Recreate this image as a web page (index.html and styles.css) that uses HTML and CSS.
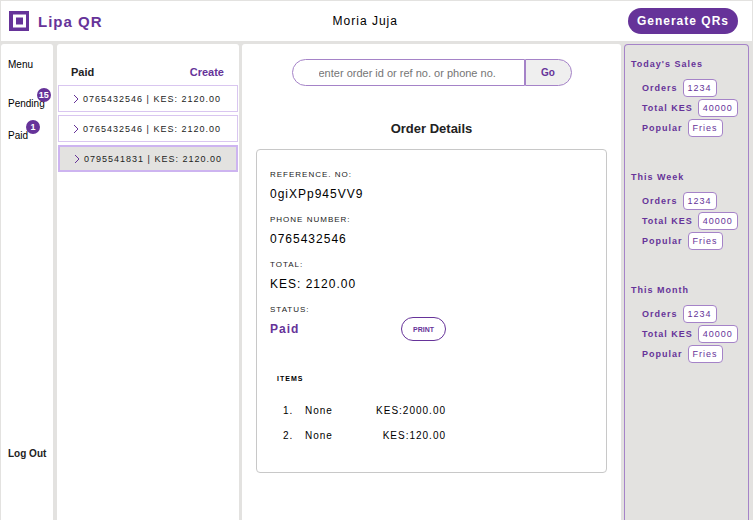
FILE: index.html
```html
<!DOCTYPE html>
<html lang="en">
<head>
<meta charset="utf-8">
<title>Lipa QR</title>
<meta name="viewport" content="width=device-width, initial-scale=1">
<link rel="stylesheet" href="styles.css">
</head>
<body>
<div class="app">
  <header class="topbar">
    <a class="brand" href="#">
      <svg class="logo" viewBox="0 0 20 20" aria-hidden="true"><path d="M0 0H20V20H0ZM4 3.5V16.5H17V3.5Z" fill="#663399" fill-rule="evenodd"/><rect x="7" y="6.5" width="7" height="7" fill="#663399"/></svg>
      <span>Lipa QR</span>
    </a>
    <span class="shop">Moria Juja</span>
    <button class="generate" type="button">Generate QRs</button>
  </header>
  <div class="columns">
    <nav class="menu">
      <span class="menu-title">Menu</span>
      <a class="menu-link" href="#">Pending<span class="count">15</span></a>
      <a class="menu-link" href="#">Paid<span class="count">1</span></a>
      <a class="logout" href="#">Log Out</a>
    </nav>
    <section class="orders">
      <div class="orders-head"><h2>Paid</h2><a href="#">Create</a></div>
      <ul class="order-list">
        <li><a class="order" href="#"><svg class="chevron" viewBox="0 0 6 10" aria-hidden="true"><path d="M1 1L5 5L1 9"/></svg>0765432546 | KES: 2120.00</a></li>
        <li><a class="order" href="#"><svg class="chevron" viewBox="0 0 6 10" aria-hidden="true"><path d="M1 1L5 5L1 9"/></svg>0765432546 | KES: 2120.00</a></li>
        <li><a class="order selected" href="#"><svg class="chevron" viewBox="0 0 6 10" aria-hidden="true"><path d="M1 1L5 5L1 9"/></svg>0795541831 | KES: 2120.00</a></li>
      </ul>
    </section>
    <main class="details">
      <form class="search">
        <input type="text" aria-label="Search orders" placeholder="enter order id or ref no. or phone no.">
        <button type="button">Go</button>
      </form>
      <h1>Order Details</h1>
      <article class="card">
        <dl class="fields">
          <dt>REFERENCE. NO:</dt><dd>0giXPp945VV9</dd>
          <dt>PHONE NUMBER:</dt><dd>0765432546</dd>
          <dt>TOTAL:</dt><dd>KES: 2120.00</dd>
          <dt>STATUS:</dt><dd class="status"><span>Paid</span><button class="print" type="button">PRINT</button></dd>
        </dl>
        <table class="items">
          <caption>ITEMS</caption>
          <tbody>
            <tr><td class="num">1.</td><td>None</td><td class="price">KES:2000.00</td></tr>
            <tr><td class="num">2.</td><td>None</td><td class="price">KES:120.00</td></tr>
          </tbody>
        </table>
      </article>
    </main>
    <aside class="stats">
      <section>
        <h3>Today's Sales</h3>
        <p>Orders <span class="value">1234</span></p>
        <p>Total KES <span class="value">40000</span></p>
        <p>Popular <span class="value">Fries</span></p>
      </section>
      <section>
        <h3>This Week</h3>
        <p>Orders <span class="value">1234</span></p>
        <p>Total KES <span class="value">40000</span></p>
        <p>Popular <span class="value">Fries</span></p>
      </section>
      <section>
        <h3>This Month</h3>
        <p>Orders <span class="value">1234</span></p>
        <p>Total KES <span class="value">40000</span></p>
        <p>Popular <span class="value">Fries</span></p>
      </section>
    </aside>
  </div>
</div>
</body>
</html>
```
FILE: styles.css
```css
* { box-sizing: border-box; }
body, h1, h2, h3, p, ul, dl, dd { margin: 0; }
body {
  background: #e3e2e0;
  color: #000;
  font-family: "Liberation Sans", Arial, sans-serif;
  font-size: 10px;
}
a { color: inherit; text-decoration: none; }
button, input { font-family: inherit; }
.app {
  display: flex;
  flex-direction: column;
  min-height: 100vh;
  padding: 1px 1px 0;
}
.topbar {
  display: flex;
  justify-content: space-between;
  align-items: center;
  padding: 7px 14px 7px 8px;
  background: #fff;
}
.brand {
  display: flex;
  align-items: center;
  gap: 9px;
  color: #663399;
  font-size: 15px;
  font-weight: bold;
  letter-spacing: 1px;
}
.logo { width: 20px; height: 20px; }
.shop { font-size: 12px; letter-spacing: 1px; }
.generate {
  height: 26px;
  padding: 0 9px;
  border: 0;
  border-radius: 13px;
  background: #663399;
  color: #fff;
  font-size: 12px;
  font-weight: bold;
  letter-spacing: 1px;
}
.columns {
  display: grid;
  flex: 1;
  grid-template-columns: 53px 182px 1fr 125px;
  gap: 3px;
  padding: 3px 3px 0 0;
}
.menu, .orders, .details { background: #fff; border-radius: 3px 3px 0 0; }
.menu {
  display: flex;
  flex-direction: column;
  align-items: flex-start;
  margin-right: 1px;
  padding: 14px 0 0 7px;
}
.menu-title { margin-bottom: 25px; line-height: 14px; }
.menu-link { position: relative; margin-bottom: 18px; line-height: 14px; }
.count {
  position: absolute;
  left: 100%;
  top: -9px;
  width: 14px;
  height: 14px;
  margin-left: -8px;
  border-radius: 50%;
  background: #663399;
  color: #fff;
  font-size: 9px;
  font-weight: bold;
  text-align: center;
}
.menu-link:nth-child(3) .count { margin-left: -2px; }
.logout { margin-top: 286px; line-height: 14px; font-weight: bold; color: #222; }
.orders { padding: 20px 1px 0; }
.orders-head {
  display: flex;
  justify-content: space-between;
  padding: 0 14px 0 13px;
  margin-bottom: 5px;
  color: #222;
  font-size: 11px;
  font-weight: bold;
  line-height: 16px;
}
.orders-head h2 { font-size: inherit; }
.orders-head a { color: #663399; }
.order-list {
  display: flex;
  flex-direction: column;
  gap: 3px;
  padding: 0;
  list-style: none;
}
.order {
  display: flex;
  align-items: center;
  gap: 4px;
  height: 27px;
  padding: 0 14px;
  border: 1px solid #d9c6f0;
  color: #222;
  font-size: 9px;
  letter-spacing: 1px;
  white-space: nowrap;
}
.selected { border: 2px solid #cdb4f0; background: #e3e2e0; }
.chevron { width: 6px; height: 10px; fill: none; stroke: #663399; }
.details { padding: 15px 14px 0; }
.search { display: flex; width: 280px; max-width: 100%; margin: 0 auto; }
.search input {
  flex: 1;
  min-width: 0;
  height: 27px;
  padding: 0 26px;
  border: 1px solid #a583c8;
  border-radius: 14px 0 0 14px;
  font-size: 11px;
}
.search input::placeholder { color: #757575; }
.search button {
  width: 47px;
  padding: 0;
  border: 1px solid #a583c8;
  border-radius: 0 14px 14px 0;
  background: #efefef;
  color: #663399;
  font-size: 10px;
  font-weight: bold;
}
h1 {
  margin: 35px 0 12px;
  color: #222;
  font-size: 13px;
  line-height: 16px;
  text-align: center;
}
.card {
  padding: 19px 13px 24px;
  border: 1px solid #c8c8c8;
  border-radius: 4px;
}
dt { color: #222; font-size: 8px; letter-spacing: 1px; line-height: 12px; }
dd { margin-bottom: 7px; font-size: 12px; letter-spacing: 1px; line-height: 26px; }
.status {
  display: flex;
  align-items: center;
  justify-content: space-between;
  width: 176px;
  margin-bottom: 30px;
  color: #663399;
  font-weight: bold;
}
.print {
  width: 45px;
  height: 24px;
  padding: 0;
  border: 1px solid #663399;
  border-radius: 12px;
  background: #fff;
  color: #663399;
  font-size: 7px;
  font-weight: bold;
}
.items {
  width: 176px;
  border-collapse: collapse;
  font-size: 10px;
  letter-spacing: 1px;
}
.items caption {
  padding: 0 0 12px 7px;
  font-size: 7px;
  font-weight: bold;
  line-height: 14px;
  text-align: left;
}
.items td { padding: 0; line-height: 25px; }
.items .num { width: 35px; padding-left: 13px; }
.items .price { text-align: right; }
.stats {
  padding: 12px 0 0 6px;
  border: 1px solid #a583c8;
  border-bottom: 0;
  border-radius: 4px 4px 0 0;
  color: #663399;
  font-size: 9px;
  font-weight: bold;
  letter-spacing: 1px;
}
.stats section { margin-bottom: 32px; }
.stats h3 { margin-bottom: 7px; font-size: inherit; line-height: 14px; }
.stats p {
  display: flex;
  align-items: center;
  gap: 5px;
  height: 20px;
  padding-left: 11px;
  white-space: nowrap;
}
.value {
  padding: 0 4px;
  border: 1px solid #a583c8;
  border-radius: 4px;
  background: #fff;
  font-weight: normal;
  line-height: 16px;
}
```
